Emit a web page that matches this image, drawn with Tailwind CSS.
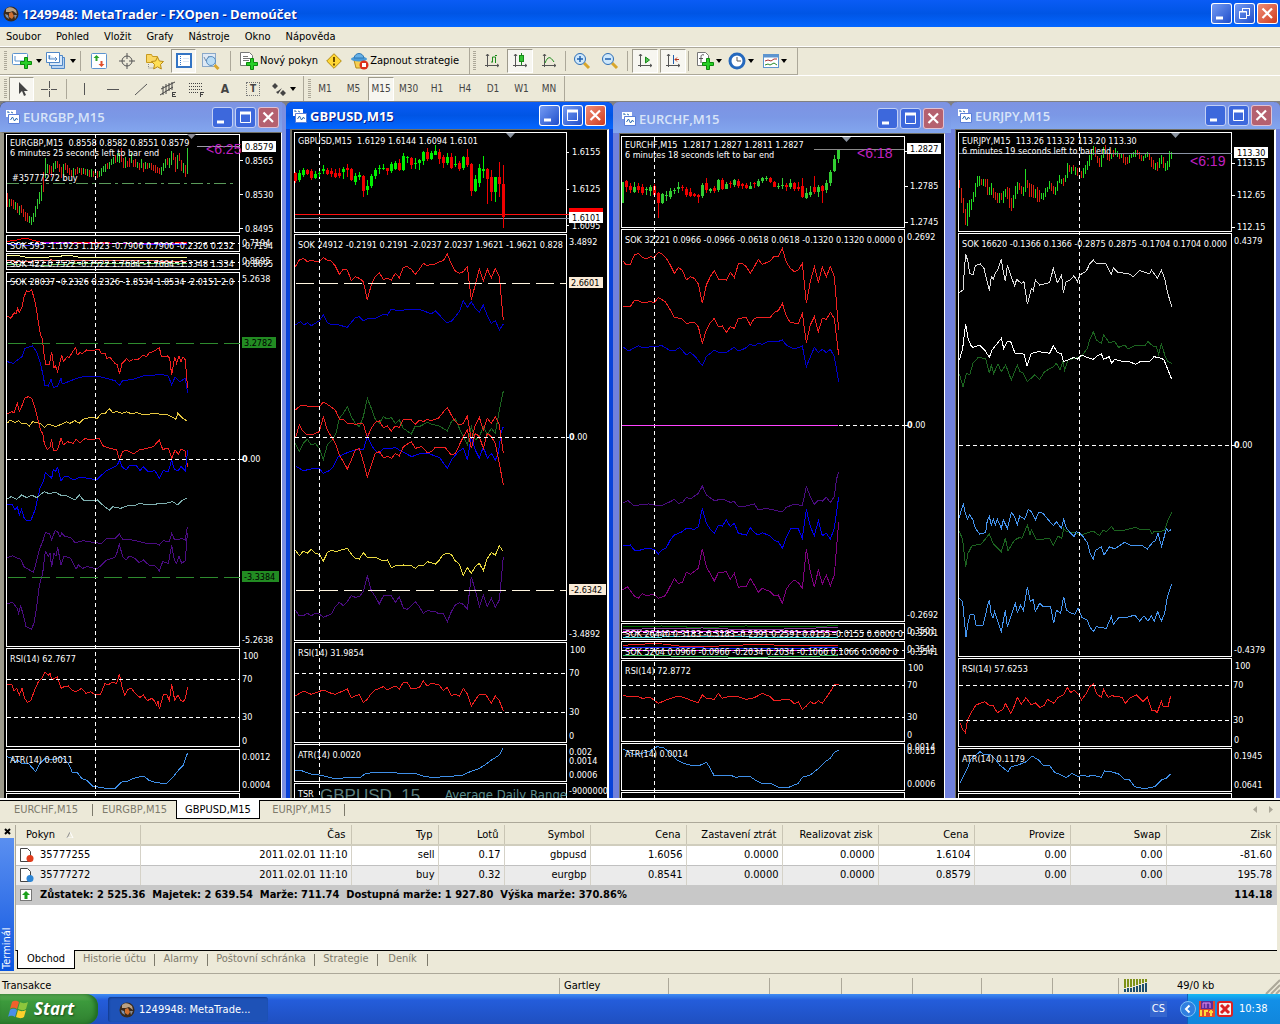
<!DOCTYPE html>
<html lang="cs">
<head>
    <meta charset="UTF-8">
    <meta name="viewport" content="width=device-width, initial-scale=1.0">
    <title>1249948: MetaTrader - FXOpen - Demoúčet</title>
    <script src="https://cdn.jsdelivr.net/npm/@tailwindcss/browser@4"></script>
    <style>
        body { font-family: 'DejaVu Sans Condensed', 'DejaVu Sans', sans-serif; }
        .caption { font-family: 'Open Sans', 'Noto Sans', sans-serif; }
        .chart text { font-size: 9px; fill: #fff; }
        .chart .clock { font: 14px 'Liberation Sans', sans-serif; fill: #c020c0; }
        .chart .series { fill: none; }
        .chart polyline { vector-effect: non-scaling-stroke; shape-rendering: crispEdges; }
        .chart .frame { fill: none; stroke: #fff; shape-rendering: crispEdges; }
        .chart .dash { fill: none; stroke: #fff; stroke-dasharray: 4 3; shape-rendering: crispEdges; }
    </style>
</head>
<body class="h-screen flex flex-col overflow-hidden bg-[#ece9d8] text-[11px] leading-4 text-black">

    <!-- Shared icons -->
    <svg class="hidden">
        <symbol id="i-min" viewBox="0 0 21 21"><path d="M5 15h7" stroke="#fff" stroke-width="3"/></symbol>
        <symbol id="i-max" viewBox="0 0 21 21"><path d="M5.500 6v9.500h10V6M5 6h11" fill="none" stroke="#fff"/><path d="M5 6h11" stroke="#fff" stroke-width="3"/></symbol>
        <symbol id="i-close" viewBox="0 0 21 21"><path d="M5.500 5.500l9.500 9.500M15 5.500l-9.500 9.500" stroke="#fff" stroke-width="2.200"/></symbol>
        <symbol id="i-doc" viewBox="0 0 16 16"><path d="M1 1h10v7H1z" fill="#fff"/><path d="M3.500 5.500h11v9h-11z" fill="#fff" stroke="#5b7fd8"/><path d="M2 3h2v1M6 3l2 1M5.500 11l2-3 2 4 2-3 1 2" fill="none" stroke="#2f6fb5"/></symbol>
        <symbol id="i-down" viewBox="0 0 6 4"><path d="M0 0h6L3 4z"/></symbol>
        <symbol id="i-plus" viewBox="0 0 12 12"><path d="M4.500.5h3v4h4v3h-4v4h-3v-4h-4v-3h4z" fill="#27cf27" stroke="#0b8a0b"/></symbol>
        <symbol id="i-axes" viewBox="0 0 16 16"><path d="M3.500 1v13M1 12.500h14M2 3l1.500-2L5 3M13 11l2 1.500-2 1.500" fill="none" stroke="#555"/></symbol>
        <symbol id="i-globe" viewBox="0 0 16 16"><circle cx="8" cy="8" r="7.500" fill="#3a2a1c"/><path d="M3 3c3-3 7-2 10 1l1 4-4-3-3 1-4 0z" fill="#b9a184"/><path d="M6 7l3-1 2 4-2 3-3-2z" fill="#cf6f2e"/><path d="M2 8l3 1 1 4-3-2z" fill="#7d93ad"/><path d="M11 9l3 0-2 4z" fill="#8a8f96"/></symbol>
    </svg>

    <!-- Title bar -->
    <header class="flex h-[27px] shrink-0 items-center px-[2px] bg-linear-to-b from-[#0a5cf5] via-[#0055e5] to-[#0466ff]">
        <svg class="size-4 mx-px"><use href="#i-globe"/></svg>
        <h1 class="caption ml-[2px] flex-1 text-[13px] font-bold text-white [text-shadow:1px_1px_#0a1883]">1249948: MetaTrader - FXOpen - Demoúčet</h1>
        <div class="flex gap-[2px]">
            <button aria-label="Minimalizovat" class="size-[21px] rounded-[3px] ring-1 ring-inset ring-white bg-linear-to-br from-[#7a9ff5] to-[#1c48c8]"><svg class="size-[21px]"><use href="#i-min"/></svg></button>
            <button aria-label="Obnovit" class="size-[21px] rounded-[3px] ring-1 ring-inset ring-white bg-linear-to-br from-[#7a9ff5] to-[#1c48c8]"><svg class="size-[21px]" fill="none" stroke="#fff"><path d="M8.500 8V5.500h7v7H13M8 5.500h8M5.500 8.500h7v7h-7zM5 9h8"/></svg></button>
            <button aria-label="Zavřít" class="size-[21px] rounded-[3px] ring-1 ring-inset ring-white bg-linear-to-br from-[#f0907a] to-[#cc3312]"><svg class="size-[21px]"><use href="#i-close"/></svg></button>
        </div>
    </header>

    <!-- Menu -->
    <nav class="flex h-5 shrink-0 items-center gap-[15px] border-b border-white px-[6px]">
        <a href="#">Soubor</a>
        <a href="#">Pohled</a>
        <a href="#">Vložit</a>
        <a href="#">Grafy</a>
        <a href="#">Nástroje</a>
        <a href="#">Okno</a>
        <a href="#">Nápověda</a>
    </nav>

    <!-- Main toolbar -->
    <div class="flex h-[28px] shrink-0 border-t border-[#aca899] whitespace-nowrap">
        <div class="flex w-[470px] shrink-0 items-center border-r border-b border-[#aca899] pl-1">
            <span class="h-5 w-[3px] bg-[repeating-linear-gradient(#aca899_0_1px,transparent_1px_2px)]"></span>
            <button aria-label="Nový graf" class="flex w-[34px] items-center gap-px pl-1"><svg class="h-5 w-6 shrink-0"><rect x="1.500" y="2.500" width="15" height="11" rx="1" fill="#fff" stroke="#5c94cf"/><path d="M4 5v5h9" fill="none" stroke="#5c94cf"/><use href="#i-plus" x="9" y="6" width="12" height="12"/></svg><svg class="h-1 w-[6px] shrink-0"><use href="#i-down"/></svg></button>
            <button aria-label="Profily" class="flex w-9 items-center gap-px pl-1"><svg class="h-5 w-6 shrink-0" fill="#fff" stroke="#4f87c7"><path d="M6.500 6.500h13v11h-13z" fill="#b9d3f0"/><path d="M4.500 4.500h13v10h-13z" fill="#d9e8f8"/><path d="M1.500 1.500h13v10h-13zM4 4v4h8M10 6l2 2-2 2"/></svg><svg class="h-1 w-[6px] shrink-0"><use href="#i-down"/></svg></button>
            <span class="mr-1 ml-[3px] h-5 w-px bg-[#aca899]"></span>
            <button aria-label="Tržní hlídka" class="flex w-7 justify-center"><svg class="size-4"><rect x=".5" y=".5" width="15" height="15" rx="1" fill="#fff" stroke="#5c94cf"/><path d="M5.500 2l3 3h-2v3h-2V5h-2z" fill="#2aa52a"/><path d="M10.500 14l3-3h-2V8h-2v3h-2z" fill="#e0502d"/></svg></button>
            <button aria-label="Datové okno" class="flex w-7 justify-center"><svg class="size-4" fill="none" stroke="#555"><circle cx="8" cy="8" r="5"/><path d="M8 0v6M8 10v6M0 8h6M10 8h6"/></svg></button>
            <button aria-label="Navigátor" class="flex w-7 justify-center"><svg class="h-[18px] w-5"><path d="M1.500 2.500h5l1 2h5v6h-11z" fill="#fbd763" stroke="#c79a1f"/><path d="M3.500 12v4h5" stroke="#888" stroke-dasharray="1 1" fill="none"/><path d="M12.500 5l1.900 4 4.100.5-3 3 .8 4.500-3.800-2.200L8.700 17l.8-4.500-3-3 4.100-.5z" fill="#ffdf55" stroke="#b98a15"/></svg></button>
            <button aria-label="Terminál" aria-pressed="true" class="ml-[2px] flex h-6 w-[25px] items-center justify-center border border-t-[#9d9a8c] border-l-[#9d9a8c] border-white bg-[#f7f6f0]"><svg class="size-4"><rect x="1" y="1" width="14" height="13" fill="#fff" stroke="#3374c4" stroke-width="2"/><path d="M4.500 3v10" stroke="#3374c4" stroke-dasharray="1 1"/><path d="M7 5.500h6M7 8.500h6" stroke="#dbe7f5"/></svg></button>
            <button aria-label="Tester strategií" class="flex w-[30px] justify-center"><svg class="h-[18px] w-5"><rect x="1.500" y="1.500" width="13" height="13" fill="#dfe9f4" stroke="#8aa8c8"/><path d="M3 5l2 4 3-5 3 5 2-4" stroke="#7c8fa5" fill="none"/><circle cx="10" cy="9" r="4.500" fill="#b9dcf5" stroke="#5b8ec0"/><path d="M13.500 13l4 4" stroke="#d8a62c" stroke-width="3"/></svg></button>
            <span class="mx-1 h-5 w-px bg-[#aca899]"></span>
            <button class="flex items-center gap-px pl-1"><svg class="h-[18px] w-5 shrink-0"><path d="M1.500.5h9l3 3v10h-12z" fill="#fff" stroke="#777"/><path d="M4 4.500h5M4 6.500h7M4 8.500h6" stroke="#777"/><use href="#i-plus" x="7" y="6" width="12" height="12"/></svg>Nový pokyn</button>
            <button aria-label="Upozornění" class="flex w-8 justify-center"><svg class="size-4"><path d="M8 .7L15.300 8 8 15.300.7 8z" fill="#ffd735" stroke="#b38a12"/><path d="M8 4v5M8 10.500v2" stroke="#6b4d00" stroke-width="2"/></svg></button>
            <button class="flex items-center"><svg class="h-[18px] w-5 shrink-0"><path d="M4 8l10 0-2 8-6 0z" fill="#f5cf52" stroke="#b98a15"/><ellipse cx="9" cy="7" rx="8" ry="2.500" fill="#4a9bd8"/><path d="M4 6c1-6 9-6 10 0z" fill="#66b0e6" stroke="#2e78b5"/><circle cx="14" cy="13" r="4.500" fill="#dd2f1a"/><rect x="12" y="11" width="4" height="4" fill="#fff"/></svg>Zapnout strategie</button>
        </div>
        <div class="flex w-[328px] shrink-0 items-center border-r border-b border-[#aca899] pl-[3px]">
            <span class="h-5 w-[3px] bg-[repeating-linear-gradient(#aca899_0_1px,transparent_1px_2px)]"></span>
            <button aria-label="Sloupcový graf" class="flex w-[31px] justify-center"><svg class="size-4"><use href="#i-axes"/><path d="M8.500 9V4h3v6M9 9H7M11 2.500h2" fill="none" stroke="#1a8a1a"/></svg></button>
            <button aria-label="Svíčkový graf" aria-pressed="true" class="flex h-6 w-[26px] items-center justify-center border border-t-[#9d9a8c] border-l-[#9d9a8c] border-white bg-[#f7f6f0]"><svg class="size-4"><use href="#i-axes"/><path d="M9.500 0v12" stroke="#1a8a1a"/><rect x="7.500" y="2.500" width="4" height="6" fill="#31c431" stroke="#1a8a1a"/></svg></button>
            <button aria-label="Čárový graf" class="flex w-8 justify-center"><svg class="size-4"><use href="#i-axes"/><path d="M4 10c3-7 5-7 9-1" fill="none" stroke="#1a8a1a"/></svg></button>
            <span class="h-5 w-px bg-[#aca899]"></span>
            <button aria-label="Přiblížit" class="ml-[2px] flex w-7 justify-center"><svg class="size-[18px]"><path d="M11 11l5 5" stroke="#d8a62c" stroke-width="3"/><circle cx="7" cy="7" r="5.500" fill="#cfe8fb" stroke="#2e6eb5"/><path d="M4 7h6M7 4v6" stroke="#1f5fae" stroke-width="1.500"/></svg></button>
            <button aria-label="Oddálit" class="flex w-7 justify-center"><svg class="size-[18px]"><path d="M11 11l5 5" stroke="#d8a62c" stroke-width="3"/><circle cx="7" cy="7" r="5.500" fill="#cfe8fb" stroke="#2e6eb5"/><path d="M4 7h6" stroke="#1f5fae" stroke-width="1.500"/></svg></button>
            <span class="mr-1 ml-[3px] h-5 w-px bg-[#aca899]"></span>
            <button aria-label="Automatický posun" aria-pressed="true" class="flex h-6 w-[26px] items-center justify-center border border-t-[#9d9a8c] border-l-[#9d9a8c] border-white bg-[#f7f6f0]"><svg class="size-4"><use href="#i-axes"/><path d="M8.500 4l4 3-4 3z" fill="#57c457" stroke="#1a8a1a"/></svg></button>
            <button aria-label="Odsazení grafu" aria-pressed="true" class="ml-[2px] flex h-6 w-[26px] items-center justify-center border border-t-[#9d9a8c] border-l-[#9d9a8c] border-white bg-[#f7f6f0]"><svg class="size-4"><use href="#i-axes"/><path d="M8.500 2v9" stroke="#1f5fae"/><path d="M14 6.500h-4M12 4.500l-2 2 2 2" stroke="#b5321c" fill="none"/></svg></button>
            <span class="mr-px ml-[2px] h-5 w-px bg-[#aca899]"></span>
            <button aria-label="Indikátory" class="flex w-8 items-center pl-[6px]"><svg class="h-[18px] w-5 shrink-0"><path d="M1.500.5h8l3 3v10h-11z" fill="#fff" stroke="#777"/><path d="M8 3c-3-1-3 1-3 3v5M3 6.500h4" fill="none" stroke="#555"/><use href="#i-plus" x="6" y="6" width="12" height="12"/></svg><svg class="h-1 w-[6px] shrink-0"><use href="#i-down"/></svg></button>
            <button aria-label="Období" class="ml-[2px] flex w-[34px] items-center gap-[2px] pl-1"><svg class="size-[18px] shrink-0"><circle cx="9" cy="9" r="7" fill="#fff" stroke="#2569bd" stroke-width="3"/><path d="M9 5v4h4" fill="none" stroke="#555"/></svg><svg class="h-1 w-[6px] shrink-0"><use href="#i-down"/></svg></button>
            <button aria-label="Šablony" class="ml-1 flex items-center gap-px"><svg class="h-4 w-[18px]"><rect x="1.500" y="1.500" width="15" height="13" fill="#fff" stroke="#5c94cf"/><path d="M1 3h16" stroke="#5c94cf" stroke-width="3"/><path d="M3 8l3-1 3 1 3-2 3 0" stroke="#a33" fill="none"/><path d="M3 12l3-1 2 1 4-2 3 2" stroke="#2a8a2a" fill="none"/></svg><svg class="h-1 w-[6px]"><use href="#i-down"/></svg></button>
        </div>
    </div>

    <!-- Drawing tools and periods -->
    <div class="flex h-[26px] shrink-0 border-t border-white text-[10px] text-[#444]">
        <div class="flex w-[304px] items-center border-r border-[#aca899] pl-1">
            <span class="h-5 w-[3px] bg-[repeating-linear-gradient(#aca899_0_1px,transparent_1px_2px)]"></span>
            <button aria-label="Kurzor" aria-pressed="true" class="ml-[2px] flex h-6 w-[25px] items-center justify-center border border-t-[#9d9a8c] border-l-[#9d9a8c] border-white bg-[#f7f6f0]"><svg class="size-4"><path d="M5 1v12l3-3 2 5 2-1-2-4h4z" fill="#444"/></svg></button>
            <button aria-label="Nitkový kříž" class="flex w-[30px] justify-center"><svg class="size-4" stroke="#555"><path d="M8.500 0v7M8.500 10v6M0 8.500h7M10 8.500h6M8 8.500h1"/></svg></button>
            <span class="mx-[2px] h-5 w-px bg-[#aca899]"></span>
            <button aria-label="Svislá čára" class="flex w-[30px] justify-center"><svg class="size-4" stroke="#555"><path d="M8.500 2v12"/></svg></button>
            <button aria-label="Vodorovná čára" class="flex w-7 justify-center"><svg class="size-4" stroke="#555"><path d="M2 8.500h12"/></svg></button>
            <button aria-label="Trendová čára" class="flex w-7 justify-center"><svg class="size-4" stroke="#555"><path d="M2 14L14 3"/></svg></button>
            <button aria-label="Kanál" class="flex w-7 justify-center"><svg class="h-[18px] w-5" stroke="#444" fill="none"><path d="M2 9L16 2M1 15L14 7M4 6v9M7 4v10M10 3v8M13 2v8"/><path d="M13.500 12v5M13 12.500h4M13 14.500h3M13 16.500h4"/></svg></button>
            <button aria-label="Fibonacci" class="flex w-7 justify-center"><svg class="h-[18px] w-5" stroke="#444" fill="none"><path d="M2 3.500h14M2 6.500h14M2 9.500h14M2 12.500h9" stroke-dasharray="1 1"/><path d="M13.500 12v5M13 12.500h4M13 14.500h3"/></svg></button>
            <button class="w-7 font-bold text-[12px]">A</button>
            <button class="flex w-7 justify-center"><span class="border border-dotted border-[#777] px-[3px] text-[10px] leading-3 font-bold">T</span></button>
            <button aria-label="Šipky" class="flex items-center gap-[3px] pl-1"><svg class="size-4" fill="#444"><path d="M4 2l3 3-3 3-3-3zM12 9l3 3-3 3-3-3zM5 11l2 2 4-6-4 3z"/></svg><svg class="h-1 w-[6px]" fill="#000"><use href="#i-down"/></svg></button>
        </div>
        <div class="flex w-[261px] items-center border-r border-[#aca899] pl-1">
            <span class="h-5 w-[3px] bg-[repeating-linear-gradient(#aca899_0_1px,transparent_1px_2px)]"></span>
            <button class="w-7">M1</button>
            <button class="w-[29px]">M5</button>
            <button aria-pressed="true" class="h-6 w-[26px] border border-t-[#9d9a8c] border-l-[#9d9a8c] border-white bg-[#f7f6f0]">M15</button>
            <button class="w-[29px]">M30</button>
            <button class="w-7">H1</button>
            <button class="w-7">H4</button>
            <button class="w-7">D1</button>
            <button class="w-[29px]">W1</button>
            <button class="w-[26px]">MN</button>
        </div>
    </div>

    <!-- Chart windows -->
    <main class="flex min-h-0 flex-1 items-stretch overflow-hidden border-t border-[#808080] bg-[#808080]">

        <!-- EURGBP -->
        <section class="flex w-[286px] shrink-0 flex-col rounded-t-md border-r-4 border-[#7b8fe0] bg-black">
            <div class="flex h-[30px] shrink-0 items-center gap-[2px] rounded-tl-md bg-linear-to-b from-[#7d93e3] via-[#7b98e6] to-[#83a6ee] pl-[5px]">
                <svg class="size-4"><use href="#i-doc"/></svg>
                <h2 class="caption flex-1 text-[13px] font-semibold text-[#d8e4f8]">EURGBP,M15</h2>
                <button aria-label="Minimalizovat" class="size-[21px] rounded-[3px] ring-1 ring-inset ring-[#c3d0f5] bg-[#3d68dc]"><svg class="size-[21px]"><use href="#i-min"/></svg></button>
                <button aria-label="Maximalizovat" class="size-[21px] rounded-[3px] ring-1 ring-inset ring-[#c3d0f5] bg-[#3d68dc]"><svg class="size-[21px]"><use href="#i-max"/></svg></button>
                <button aria-label="Zavřít" class="mr-[3px] size-[21px] rounded-[3px] ring-1 ring-inset ring-[#e0c3d5] bg-[#b5616f]"><svg class="size-[21px]"><use href="#i-close"/></svg></button>
            </div>
            <div class="min-h-0 flex-1 overflow-hidden border-t border-l-4 border-r border-t-[#716f64] border-l-[#9a988a] border-r-white">
            <svg class="chart h-[668px] w-[277px]" viewBox="4 133 277 668">
                <g class="candles" data-chart="eurgbp" transform="translate(0 100)"></g>
                <g class="series" transform="translate(0 100) scale(.33333)">
                    <polyline stroke="#f00" points="22,424 50,420 66,416 80,414 95,420 115,425 135,430 155,426 200,429 300,428 420,432 562,428"/>
                    <polyline stroke="#33f" points="22,432 80,436 150,430 562,433"/>
                    <polyline stroke="#c0c" points="120,428 300,430 562,430"/>
                    <polyline stroke="#ff9" points="22,466 60,468 80,472 115,474 160,470 210,466 250,474 562,473"/>
                    <polyline stroke="#f66" points="22,482 70,485 150,480 562,484"/>
                    <polyline stroke="#6c6" points="22,492 100,498 240,490 562,490"/>
                    <polyline stroke="#999" points="22,500 90,496 180,501 562,499"/>
                    <polyline stroke="#f02020" points="22,648 33,655 42,638 48,642 53,625 58,637 66,620 72,590 80,573 88,575 95,570 103,597 108,620 114,660 122,707 127,715 133,770 138,795 148,795 155,755 162,803 166,797 173,815 185,765 190,785 202,770 208,772 218,755 227,743 232,765 240,758 248,760 260,750 275,752 298,748 303,760 315,760 320,775 330,772 345,790 352,795 359,822 366,790 374,783 380,775 388,785 400,777 415,778 430,765 440,770 448,758 460,755 478,743 484,768 493,770 502,768 509,775 515,825 524,770 530,790 537,768 543,785 549,770 556,780 560,830 563,865"/>
                    <polyline stroke="#00c" points="22,785 40,790 55,778 66,770 75,745 97,738 110,755 120,785 128,820 135,857 145,858 153,838 160,862 172,860 183,835 187,852 205,845 230,835 260,828 300,830 330,838 345,842 358,856 368,842 400,838 430,828 465,825 480,822 505,828 515,855 525,832 540,845 556,835 563,880"/>
                    <polyline stroke="#e8c840" points="22,970 30,960 45,967 55,962 65,970 80,972 88,978 98,965 110,968 122,970 133,982 145,972 168,980 185,972 200,965 210,970 225,962 238,970 250,958 270,952 292,955 304,940 314,942 328,926 338,938 350,934 365,940 380,935 395,942 410,938 430,944 470,940 490,945 505,945 518,952 528,958 533,940 548,955 560,962"/>
                    <polyline stroke="#f02020" points="22,942 35,935 42,938 52,910 58,935 68,912 74,895 85,890 95,895 105,925 115,965 122,992 128,1000 133,1030 142,1048 150,1042 155,1018 160,1052 172,1050 183,1015 190,1035 202,1025 220,1030 228,1018 240,1028 256,1015 270,1020 297,1015 310,1038 330,1045 350,1050 358,1078 368,1055 380,1050 400,1062 418,1050 440,1045 460,1040 478,1020 488,1048 505,1045 515,1075 525,1050 535,1062 543,1048 555,1052 563,1100"/>
                </g>
                <g class="series" transform="translate(0 450) scale(.33333)">
                    <polyline stroke="#00e" points="22,165 38,165 45,180 52,170 58,195 65,178 72,203 80,213 92,213 105,180 112,150 120,115 130,95 136,68 148,78 155,85 160,58 166,65 173,52 183,92 195,78 205,80 220,90 240,82 265,85 290,90 305,75 320,62 345,50 352,45 359,30 366,50 378,60 390,45 410,48 420,62 430,50 445,65 465,62 478,85 490,62 505,65 515,30 523,58 535,62 543,50 556,62 563,0"/>
                    <polyline stroke="#7fb0b0" points="22,147 33,140 50,148 65,135 80,143 95,135 110,143 133,125 145,130 168,128 185,137 200,138 225,150 238,135 250,150 270,152 292,150 305,162 328,181 338,170 362,175 380,168 400,168 420,160 445,165 470,162 490,162 518,155 533,165 548,150 560,145"/>
                    <polyline stroke="#4b0c82" points="22,323 38,317 52,325 62,328 72,350 85,358 100,367 108,340 118,298 128,275 136,248 148,250 155,270 165,242 173,245 180,262 185,250 195,260 212,262 225,278 250,272 285,278 305,280 320,265 345,265 358,252 368,268 385,268 420,275 440,280 465,280 478,285 490,272 508,275 515,250 524,270 535,270 545,265 556,270 562,230"/>
                    <polyline stroke="#4b0c82" points="22,460 38,458 52,475 56,490 62,468 70,495 78,530 95,538 103,515 110,470 118,405 128,370 136,305 145,318 150,310 155,350 162,310 168,318 173,292 183,345 192,318 212,325 228,358 235,345 248,355 262,350 290,357 305,345 320,330 345,322 352,305 358,283 368,320 378,330 388,318 405,325 418,338 430,330 450,348 465,348 478,362 488,335 505,340 515,285 523,330 530,340 537,318 545,340 556,332 562,250"/>
                    <polyline stroke="#f02020" points="22,702 36,705 42,722 50,715 58,735 66,715 74,745 82,757 92,752 105,718 115,695 125,685 135,667 145,675 150,670 156,690 172,680 183,715 192,710 205,708 215,720 227,725 245,715 258,730 272,725 285,735 302,732 315,700 325,705 335,697 350,700 358,672 366,710 374,735 384,718 394,715 410,735 420,742 430,735 442,752 455,745 465,755 470,765 474,752 478,778 490,735 500,733 508,752 515,702 524,750 534,735 543,752 550,755 556,745 563,710"/>
                    <polyline stroke="#3f8fe8" points="22,920 36,925 45,938 52,930 65,940 85,940 107,965 120,940 135,925 160,930 178,922 190,925 205,940 217,967 232,968 245,985 262,992 280,1010 305,1012 320,1016 345,1016 360,1000 368,995 385,993 400,985 432,978 448,992 470,998 500,1001 520,980 540,955 550,945 557,925 563,908"/>
                </g>
                <path class="frame" d="M6.500 134.500h233v98h-233zM6.500 235.500h233v16h-233zM6.500 253.500h233v16h-233zM6.500 272.500h233v374h-233zM6.500 648.500h233v98h-233zM6.500 749.500h233v42h-233zM6.500 802v-8.500h233v8.500M240 160.500h3M240 194.500h3M240 228.500h3M240 459.500h3"/>
                <path class="dash" d="M95.500 134v668M7 459.500h233M7 679.500h233M7 717.500h233M7 243.500h233M7 262.500h233M7 281.500h233"/>
                <path d="M7 183.500h230" stroke="#5a9a5a" stroke-dasharray="12 4 3 4" shape-rendering="crispEdges"/>
                <path d="M8 343.500h232M8 577.500h232" stroke="#2e8b2e" stroke-dasharray="18 6" shape-rendering="crispEdges"/>
                <path d="M197 146.500h43" stroke="#9a9aa5" shape-rendering="crispEdges"/>
                <path d="M187 134h9l-4.500 5z" fill="#8a8a94"/>
                <text x="10" y="146" xml:space="preserve">EURGBP,M15  0.8558 0.8582 0.8551 0.8579</text>
                <text x="10" y="156">6 minutes 25 seconds left to bar end</text>
                <text x="12" y="181">#35777272 buy</text>
                <text class="clock" x="206" y="154">&lt;6:25</text>
                <text x="10" y="249">SOK 595 -1.1923 1.1923 -0.7906 0.7906 -0.2326 0.232</text>
                <text x="10" y="267">SOK 422 0.7522 -0.7522 1.7684 -1.7684 -1.3348 1.334</text>
                <text x="10" y="285">SOK 28037 -0.2326 0.2326 -1.8534 1.8534 -2.0151 2.0</text>
                <text x="10" y="662">RSI(14) 62.7677</text>
                <text x="10" y="763">ATR(14) 0.0011</text>
                <rect x="242" y="141" width="34" height="11" fill="#fff"/>
                <text x="245" y="150" style="fill:#000">0.8579</text>
                <text x="245" y="164">0.8565</text>
                <text x="245" y="198">0.8530</text>
                <text x="245" y="232">0.8495</text>
                <text x="242" y="246">0.7194</text>
                <text x="242" y="249">-0.7194</text>
                <text x="242" y="264">0.8695</text>
                <text x="242" y="267">-0.8695</text>
                <text x="242" y="282">5.2638</text>
                <rect x="242" y="337" width="34" height="11" fill="#228b22"/>
                <text x="244" y="346" style="fill:#000">3.2782</text>
                <text x="242" y="462"><tspan font-weight="bold">0</tspan>.00</text>
                <rect x="242" y="571" width="37" height="11" fill="#228b22"/>
                <text x="244" y="580" style="fill:#000">-3.3384</text>
                <text x="242" y="643">-5.2638</text>
                <text x="243" y="659">100</text>
                <text x="242" y="682">70</text>
                <text x="242" y="720">30</text>
                <text x="242" y="744">0</text>
                <text x="242" y="760">0.0012</text>
                <text x="242" y="788">0.0004</text>
            </svg>
            </div>
        </section>

        <!-- GBPUSD, active -->
        <section class="flex w-[327px] shrink-0 flex-col rounded-t-md border-x-4 border-[#0842d8] bg-black">
            <div class="-mx-1 flex h-[27px] shrink-0 items-center gap-[2px] rounded-t-md bg-linear-to-b from-[#0a5cf5] via-[#0055e5] to-[#0466ff] pl-[6px]">
                <svg class="size-4"><use href="#i-doc"/></svg>
                <h2 class="caption flex-1 text-[13px] font-bold text-white [text-shadow:1px_1px_#0a1883]">GBPUSD,M15</h2>
                <button aria-label="Minimalizovat" class="size-[21px] rounded-[3px] ring-1 ring-inset ring-white bg-linear-to-br from-[#7a9ff5] to-[#1c48c8]"><svg class="size-[21px]"><use href="#i-min"/></svg></button>
                <button aria-label="Maximalizovat" class="size-[21px] rounded-[3px] ring-1 ring-inset ring-white bg-linear-to-br from-[#7a9ff5] to-[#1c48c8]"><svg class="size-[21px]"><use href="#i-max"/></svg></button>
                <button aria-label="Zavřít" class="mr-[7px] size-[21px] rounded-[3px] ring-1 ring-inset ring-white bg-linear-to-br from-[#f0907a] to-[#cc3312]"><svg class="size-[21px]"><use href="#i-close"/></svg></button>
            </div>
            <div class="min-h-0 flex-1 overflow-hidden border-t border-l-2 border-r-2 border-t-[#716f64] border-l-[#716f64] border-r-white">
            <svg class="chart h-[671px] w-[315px]" viewBox="292 130 315 671">
                <g class="series" transform="translate(285 100) scale(.33333)">
                    <polyline stroke="#f02020" points="31,500 43,480 55,475 67,485 79,480 91,485 103,485 115,473 127,480 139,483 151,498 163,523 175,507 187,510 199,542 211,530 223,535 235,545 247,600 259,553 271,530 283,518 295,538 307,535 319,540 331,520 343,533 355,502 367,500 379,508 391,523 403,508 415,490 427,497 439,493 451,492 463,485 475,482 487,462 499,492 511,513 523,520 535,515 547,500 559,600 571,553 583,507 595,543 607,507 619,533 631,505 643,530 655,660"/>
                    <polyline stroke="#00c" points="31,675 46,665 58,675 67,668 79,677 91,670 103,662 115,645 127,667 139,675 151,672 187,682 211,653 223,650 235,663 247,656 271,655 295,643 307,645 319,627 343,633 367,628 391,630 403,628 415,632 439,642 451,633 463,645 485,668 500,663 515,645 523,635 535,602 547,622 559,605 571,625 583,637 595,615 607,648 619,670 631,662 643,690 655,672"/>
                    <polyline stroke="#00e" points="34,1100 55,1112 79,1107 103,1105 115,1120 133,1112 145,1100 160,1070 187,1058 211,1050 235,1050 247,1008 259,1035 271,1052 283,1060 295,1045 319,1045 331,1042 343,1050 380,1070 403,1062 430,1060 450,1068 463,1072 487,1105 499,1080 520,1055 535,1045 547,1080 559,1010 571,1050 583,1075 595,1040 607,1075 619,1060 631,1080 640,1060 648,1000 655,980"/>
                    <polyline stroke="#1c6420" points="31,1030 43,1055 55,1030 67,1018 79,1035 91,1030 103,1045 115,1078 127,1035 145,1015 153,1000 163,955 175,940 187,920 199,950 211,970 223,980 235,950 247,895 259,925 271,958 283,970 295,950 307,957 319,953 331,970 343,960 355,985 379,1002 391,978 403,980 427,967 439,972 463,978 487,993 499,965 511,957 523,985 535,1010 547,1035 559,980 571,1020 583,1010 595,980 607,1005 619,985 631,1000 643,930 655,873"/>
                    <polyline stroke="#f02020" points="31,930 46,917 67,918 79,920 91,918 103,920 115,906 130,915 151,930 163,957 175,958 187,970 199,970 211,973 223,970 235,972 247,1012 259,985 271,967 283,963 295,983 307,978 319,993 331,978 343,982 355,958 367,960 379,960 391,973 403,960 415,965 427,958 439,962 460,955 472,940 487,922 499,945 511,965 523,975 535,970 547,948 559,1018 571,975 583,952 595,990 607,955 619,970 631,950 643,975 655,1060"/>
                    <polyline stroke="#f02020" points="31,1015 43,975 52,992 67,1005 79,1005 91,1000 103,995 115,950 127,990 139,1010 151,1030 163,1065 175,1085 187,1107 199,1080 211,1050 223,1045 235,1085 247,1130 259,1095 271,1060 283,1055 295,1072 310,1070 320,1075 331,1060 343,1068 355,1040 379,1025 391,1045 410,1040 427,1058 439,1055 451,1042 480,1042 499,1065 511,1060 523,1035 535,1010 547,990 559,1045 571,1000 583,1010 595,1045 607,1000 619,1010 631,1030 643,1090 655,1155"/>
                </g>
                <g class="series" transform="translate(285 450) scale(.33333)">
                    <polyline stroke="#e8d840" points="31,300 43,317 55,303 67,310 79,298 91,310 103,313 115,333 127,308 139,300 151,305 187,295 199,312 211,325 223,327 235,308 247,322 271,322 295,333 307,330 319,353 331,347 355,345 379,347 391,355 403,345 415,347 427,335 451,342 463,330 475,313 487,310 499,313 511,333 523,342 535,377 547,352 559,370 571,350 583,340 595,362 607,325 619,308 631,315 643,287 653,303"/>
                    <polyline stroke="#4b0c82" points="31,480 43,498 55,497 67,490 79,497 91,490 103,492 115,502 139,492 151,470 163,457 175,467 187,455 199,437 211,442 223,440 235,425 247,378 259,422 271,440 283,462 295,438 319,437 331,457 343,440 355,475 367,478 379,467 391,455 403,470 415,490 427,482 451,485 463,492 475,490 487,515 499,485 511,465 523,458 535,463 547,478 559,380 571,422 583,470 595,435 607,470 619,445 631,472 643,450 655,320"/>
                    <polyline stroke="#f02020" points="31,738 55,723 79,733 115,720 139,730 151,733 187,717 199,743 223,733 235,757 247,748 259,730 271,720 295,710 307,720 331,708 343,717 355,697 367,698 379,717 403,713 415,693 427,708 439,700 463,705 475,722 487,712 499,737 511,732 523,738 535,715 547,732 559,768 571,750 583,733 603,735 619,760 631,738 643,752 655,783"/>
                    <polyline stroke="#3f8fe8" points="31,963 45,960 65,968 80,973 103,975 125,980 151,987 175,984 225,983 240,972 265,967 325,967 350,972 391,970 420,980 455,983 480,978 500,980 515,975 530,977 560,963 580,957 600,945 620,930 643,915 655,893"/>
                </g>
                <path class="frame" d="M294.500 132.500h272v100h-272zM294.500 234.500h272v406h-272zM294.500 642.500h272v100h-272zM294.500 744.500h272v37h-272zM294.500 802v-18.500h272v18.500M567 152.500h2M567 189.500h2M567 225.500h2M567 437.500h2"/>
                <path class="dash" d="M319.500 133v669M295 437.500h272M295 673.500h272M295 712.500h272"/>
                <path d="M296 283.500h271M296 590.500h271" stroke="#fff6e0" stroke-dasharray="18 6" shape-rendering="crispEdges"/>
                <path d="M295 214.500h274" stroke="#ff1010" shape-rendering="crispEdges"/>
                <path d="M295 218.500h274" stroke="#8a93a5" shape-rendering="crispEdges"/>
                <g class="candles" data-chart="gbpusd" transform="translate(285 100)"></g>
                <path d="M506 133h9l-4.500 5z" fill="#8a93a0"/>
                <text x="298" y="144" xml:space="preserve">GBPUSD,M15  1.6129 1.6144 1.6094 1.6101</text>
                <svg x="295" y="235" width="271" height="20"><text x="3" y="13">SOK 24912 -0.2191 0.2191 -2.0237 2.0237 1.9621 -1.9621 0.828</text></svg>
                <text x="298" y="656">RSI(14) 31.9854</text>
                <text x="298" y="758">ATR(14) 0.0020</text>
                <text x="298" y="797">TSR</text>
                <text x="320" y="801" xml:space="preserve" style="font:17px 'Liberation Sans',sans-serif;fill:#5f8080">GBPUSD  15</text>
                <text x="445" y="799" style="font-size:13px;fill:#5f9090">Average Daily Range</text>
                <text x="572" y="155">1.6155</text>
                <text x="572" y="192">1.6125</text>
                <text x="572" y="229">1.6095</text>
                <rect x="569" y="208" width="34" height="5" fill="#f00"/>
                <rect x="569" y="212" width="34" height="11" fill="#fff"/>
                <text x="572" y="221" style="fill:#000">1.6101</text>
                <text x="569" y="245">3.4892</text>
                <rect x="569" y="277" width="34" height="11" fill="#faebd7"/>
                <text x="571" y="286" style="fill:#000">2.6601</text>
                <text x="569" y="440"><tspan font-weight="bold">0</tspan>.00</text>
                <rect x="569" y="584" width="37" height="11" fill="#faebd7"/>
                <text x="571" y="593" style="fill:#000">-2.6342</text>
                <text x="569" y="637">-3.4892</text>
                <text x="570" y="653">100</text>
                <text x="569" y="676">70</text>
                <text x="569" y="715">30</text>
                <text x="569" y="739">0</text>
                <text x="569" y="755">0.002</text>
                <text x="569" y="764">0.0014</text>
                <text x="569" y="778">0.0006</text>
                <text x="569" y="794">-9000000</text>
            </svg>
            </div>
        </section>

        <!-- EURCHF -->
        <section class="flex w-[338px] shrink-0 flex-col rounded-t-md border-x-[6px] border-[#7080dc] bg-black">
            <div class="-mx-[6px] flex h-[31px] shrink-0 items-center gap-[2px] rounded-t-md bg-linear-to-b from-[#7d93e3] via-[#7b98e6] to-[#83a6ee] pt-[2px] pl-2">
                <svg class="size-4"><use href="#i-doc"/></svg>
                <h2 class="caption flex-1 text-[13px] font-semibold text-[#d8e4f8]">EURCHF,M15</h2>
                <button aria-label="Minimalizovat" class="size-[21px] rounded-[3px] ring-1 ring-inset ring-[#c3d0f5] bg-[#3d68dc]"><svg class="size-[21px]"><use href="#i-min"/></svg></button>
                <button aria-label="Maximalizovat" class="size-[21px] rounded-[3px] ring-1 ring-inset ring-[#c3d0f5] bg-[#3d68dc]"><svg class="size-[21px]"><use href="#i-max"/></svg></button>
                <button aria-label="Zavřít" class="mr-[7px] size-[21px] rounded-[3px] ring-1 ring-inset ring-[#e0c3d5] bg-[#b5616f]"><svg class="size-[21px]"><use href="#i-close"/></svg></button>
            </div>
            <div class="min-h-0 flex-1 overflow-hidden border-t border-l border-r border-t-[#716f64] border-l-[#716f64] border-r-white">
            <svg class="chart h-[667px] w-[325px]" viewBox="620 134 325 667">
                <g class="candles" data-chart="eurchf" transform="translate(612 100)"></g>
                <g class="series" transform="translate(612 100) scale(.33333)">
                    <polyline stroke="#f02020" points="32,482 43,495 55,493 67,465 79,460 91,472 103,477 115,470 127,472 139,457 151,462 163,475 175,495 187,520 199,503 211,510 223,540 235,530 247,535 259,552 271,610 283,555 295,530 307,512 319,537 343,540 355,517 367,533 379,492 391,490 403,500 415,520 427,500 439,478 451,493 475,483 487,468 499,470 511,445 523,487 535,505 547,515 559,510 571,490 583,610 595,545 607,500 619,548 631,502 643,530 655,500 667,530 680,690"/>
                    <polyline stroke="#f02020" points="32,620 55,620 67,602 79,602 91,608 115,605 127,608 139,593 160,605 175,630 187,652 211,657 223,670 247,667 259,680 271,730 283,690 295,668 307,655 319,680 331,678 343,697 355,680 367,685 379,655 403,653 415,675 427,655 439,652 475,652 487,637 499,632 511,610 523,648 535,668 559,670 571,640 583,728 595,675 607,650 619,695 631,655 643,658 655,637 667,655 680,765"/>
                    <polyline stroke="#00c" points="32,740 50,753 79,737 91,743 150,737 175,752 187,753 203,742 223,765 235,757 250,770 271,797 283,770 307,750 319,757 343,757 367,742 379,753 400,745 415,732 427,738 439,730 451,733 470,723 500,724 511,720 523,735 547,747 571,738 583,800 607,742 619,757 631,748 643,758 655,748 667,770 680,845"/>
                </g>
                <g class="series" transform="translate(612 450) scale(.33333)">
                    <polyline stroke="#4b0c82" points="32,160 48,152 67,168 91,163 110,162 145,168 175,155 187,148 199,160 211,158 223,142 235,147 259,130 271,108 283,135 307,152 331,147 355,157 367,155 379,170 403,168 427,162 439,180 463,175 499,183 511,185 523,172 547,162 571,167 583,110 595,140 607,163 619,150 631,153 643,142 655,157 667,140 673,90 680,65"/>
                    <polyline stroke="#00e" points="32,287 55,285 67,300 79,302 103,295 127,298 139,312 150,300 163,293 175,270 187,255 211,245 223,235 247,238 259,230 271,175 283,220 295,238 307,250 319,225 331,228 343,210 355,230 367,220 379,250 403,255 415,233 427,248 439,255 451,248 475,258 487,272 499,275 511,295 523,262 535,237 559,237 571,265 583,178 595,230 607,257 619,212 631,257 643,250 655,267 667,235 680,140"/>
                    <polyline stroke="#800080" points="32,420 46,410 67,438 79,445 91,430 103,438 127,432 139,445 160,437 175,408 187,385 199,400 211,398 223,367 235,373 259,355 271,297 283,350 307,393 319,368 343,365 355,388 367,370 379,412 391,410 403,410 415,385 427,405 439,427 451,415 475,425 487,437 499,435 511,460 523,418 535,400 547,390 559,398 571,415 583,297 595,365 607,410 619,360 631,402 643,375 655,407 667,375 680,215"/>
                    <polyline stroke="#060" points="32,530 150,528 271,533 400,528 583,530 678,527"/>
                    <polyline stroke="#849" points="32,538 271,534 420,540 678,532"/>
                    <polyline stroke="#f4f" points="32,545 678,545"/>
                    <polyline stroke="#844" points="32,553 300,556 678,552"/>
                    <polyline stroke="#4dd" points="32,562 271,560 678,563"/>
                    <polyline stroke="#f02020" points="32,586 135,580 200,588 271,590 420,584 678,588"/>
                    <polyline stroke="#22f" points="32,592 271,594 430,596 678,593"/>
                    <polyline stroke="#f4f" points="32,602 678,602"/>
                    <polyline stroke="#3b5" points="32,615 271,620 420,622 678,617"/>
                    <polyline stroke="#f02020" points="32,735 50,740 75,738 91,745 115,742 139,760 163,750 199,738 223,745 247,755 259,757 271,735 283,745 307,748 319,730 331,745 355,738 379,740 403,748 427,743 451,730 475,740 487,753 523,748 535,750 547,762 559,755 571,778 583,768 595,755 607,762 619,752 631,760 643,742 655,725 667,705 680,702"/>
                    <polyline stroke="#3f8fe8" points="32,897 50,905 70,915 90,910 110,905 135,890 155,893 175,910 195,930 215,940 235,945 259,948 283,937 292,950 307,978 355,975 370,982 391,979 415,980 430,990 450,1000 475,1000 499,1012 530,1012 559,1000 571,982 595,975 620,955 640,935 655,925 667,907 680,900"/>
                </g>
                <path class="frame" d="M621.500 136.500h283v91h-283zM621.500 229.500h283v392h-283zM621.500 623.500h283v16h-283zM621.500 641.500h283v17h-283zM621.500 660.500h283v81h-283zM621.500 743.500h283v47h-283zM621.500 802v-9.500h283v9.500M905 151.500h3M905 186.500h3M905 222.500h3M905 425.500h3"/>
                <path class="dash" d="M654.500 137v665M622 425.500h283M622 685.500h283M622 717.500h283M622 632.500h283M622 650.500h283"/>
                <path d="M622 425.500h216" stroke="#f4f" shape-rendering="crispEdges"/>
                <path d="M814 149.500h90" stroke="#8a8a8a" shape-rendering="crispEdges"/>
                <path d="M842 137h9l-4.500 5z" fill="#8a93a0"/>
                <text x="625" y="148" xml:space="preserve">EURCHF,M15  1.2817 1.2827 1.2811 1.2827</text>
                <text x="625" y="158">6 minutes 18 seconds left to bar end</text>
                <text class="clock" x="857" y="158">&lt;6:18</text>
                <svg x="622" y="230" width="282" height="20"><text x="3" y="13">SOK 32221 0.0966 -0.0966 -0.0618 0.0618 -0.1320 0.1320 0.0000 0</text></svg>
                <svg x="622" y="624" width="282" height="36"><text x="3" y="13">SOK 26440 0.3183 -0.3183 -0.2591 0.2591 0.0155 -0.0155 0.0000 0</text><text x="3" y="31">SOK 5264 0.0966 -0.0966 -0.2034 0.2034 -0.1066 0.1066 0.0000 0</text></svg>
                <text x="625" y="674">RSI(14) 72.8772</text>
                <text x="625" y="757">ATR(14) 0.0014</text>
                <rect x="907" y="143" width="34" height="11" fill="#fff"/>
                <text x="910" y="152" style="fill:#000">1.2827</text>
                <text x="910" y="189">1.2785</text>
                <text x="910" y="225">1.2745</text>
                <text x="907" y="240">0.2692</text>
                <text x="907" y="428"><tspan font-weight="bold">0</tspan>.00</text>
                <text x="907" y="618">-0.2692</text>
                <text x="907" y="634">0.3501</text>
                <text x="907" y="636">-0.3501</text>
                <text x="907" y="652">0.3541</text>
                <text x="907" y="655">-0.3541</text>
                <text x="908" y="671">100</text>
                <text x="907" y="688">70</text>
                <text x="907" y="720">30</text>
                <text x="907" y="738">0</text>
                <text x="907" y="750">0.0014</text>
                <text x="907" y="754">0.0015</text>
                <text x="907" y="787">0.0006</text>
            </svg>
            </div>
        </section>

        <!-- EURJPY -->
        <section class="flex min-w-[329px] flex-1 flex-col rounded-t-md border-x-4 border-[#7080dc] bg-black">
            <div class="-mx-1 flex h-[27px] shrink-0 items-center gap-[2px] rounded-t-md bg-linear-to-b from-[#7d93e3] via-[#7b98e6] to-[#83a6ee] pl-[6px]">
                <svg class="size-4"><use href="#i-doc"/></svg>
                <h2 class="caption flex-1 text-[13px] font-semibold text-[#d8e4f8]">EURJPY,M15</h2>
                <button aria-label="Minimalizovat" class="size-[21px] rounded-[3px] ring-1 ring-inset ring-[#c3d0f5] bg-[#3d68dc]"><svg class="size-[21px]"><use href="#i-min"/></svg></button>
                <button aria-label="Maximalizovat" class="size-[21px] rounded-[3px] ring-1 ring-inset ring-[#c3d0f5] bg-[#3d68dc]"><svg class="size-[21px]"><use href="#i-max"/></svg></button>
                <button aria-label="Zavřít" class="mr-2 size-[21px] rounded-[3px] ring-1 ring-inset ring-[#e0c3d5] bg-[#b5616f]"><svg class="size-[21px]"><use href="#i-close"/></svg></button>
            </div>
            <div class="min-h-0 flex-1 overflow-hidden border-t border-l border-r-2 border-t-[#716f64] border-l-[#716f64] border-r-white">
            <svg class="chart h-[671px] w-[315px]" viewBox="956 130 315 671">
                <g class="candles" data-chart="eurjpy" transform="translate(948 100)"></g>
                <g class="series" transform="translate(948 100) scale(.33333)">
                    <polyline stroke="#ddd" points="34,578 45,570 49,510 53,462 60,485 65,520 75,525 82,497 97,492 108,505 116,540 124,572 130,530 136,537 142,520 150,508 160,478 166,515 172,543 178,495 187,523 200,558 206,538 220,550 228,545 238,613 250,565 256,572 262,540 275,555 288,552 305,548 316,505 328,548 341,525 346,580 354,545 367,540 378,527 388,545 396,525 415,513 425,492 436,480 445,490 473,490 480,503 490,523 496,503 510,518 540,520 556,530 575,512 605,522 610,510 618,520 628,535 640,510 650,535 658,575 671,620"/>
                    <polyline stroke="#1c6420" points="34,822 45,860 55,820 65,825 75,790 90,773 113,775 124,820 130,795 137,820 150,792 160,815 173,795 190,840 208,795 216,815 224,818 238,845 260,825 275,838 290,815 316,800 325,790 336,810 345,785 350,810 360,780 380,775 400,770 418,745 425,720 436,695 445,720 460,730 467,705 475,715 482,727 500,725 512,742 530,735 540,747 565,735 590,738 600,725 615,738 625,740 632,763 640,732 652,770 660,785 671,790"/>
                    <polyline stroke="#fff" points="34,780 44,745 53,672 60,715 68,735 75,742 95,735 110,750 124,772 132,750 148,730 160,715 167,745 178,725 188,725 202,762 220,760 228,763 237,797 250,760 270,755 288,757 305,760 316,737 328,758 340,760 346,785 360,780 378,772 388,778 400,765 412,770 436,778 447,768 460,762 467,778 484,770 491,790 500,778 525,785 540,783 562,793 580,783 605,785 618,770 640,775 648,780 658,805 671,837"/>
                </g>
                <g class="series" transform="translate(948 450) scale(.33333)">
                    <polyline stroke="#1c6420" points="34,243 44,270 53,350 60,310 72,287 100,282 124,252 135,280 160,305 172,265 180,302 200,270 215,262 222,265 238,225 246,255 250,240 265,270 305,265 316,287 330,258 341,265 347,235 355,245 378,248 400,255 435,243 455,257 465,240 475,245 491,230 500,242 530,240 562,232 580,240 605,238 612,252 618,245 635,245 650,240 660,210 671,187"/>
                    <polyline stroke="#4595f0" points="34,205 40,178 46,163 52,190 58,208 65,195 75,210 82,235 95,252 113,248 118,210 124,200 130,225 136,208 142,225 148,208 160,235 166,210 178,235 190,187 200,200 208,225 215,198 230,208 241,178 250,185 262,210 272,187 285,190 300,208 316,227 325,215 340,235 347,208 355,235 378,260 385,245 395,250 404,258 418,278 427,312 436,327 442,302 460,290 468,315 485,290 500,297 530,277 550,287 580,285 598,297 613,278 622,272 630,250 641,290 655,235 661,245 670,238"/>
                    <polyline stroke="#4595f0" points="34,445 44,455 48,500 54,560 60,520 66,495 78,495 84,525 104,528 112,497 118,470 124,450 130,495 135,505 140,485 148,510 160,545 172,480 178,530 202,460 208,488 218,465 226,482 238,410 247,455 256,448 262,485 275,460 286,470 308,470 317,520 325,480 338,490 347,440 355,480 370,490 380,493 390,475 402,503 418,510 425,530 436,545 445,530 475,535 490,500 496,523 512,503 535,503 560,495 575,513 588,498 600,513 610,497 619,513 629,485 640,513 650,490 658,440 671,403"/>
                    <polyline stroke="#f02020" points="36,818 44,838 52,848 58,812 68,790 84,765 110,755 125,767 134,765 148,788 166,777 172,760 188,790 196,775 208,742 220,763 234,743 250,765 262,758 276,773 290,765 298,748 318,760 330,742 348,733 358,712 368,728 378,720 394,735 400,750 415,730 425,710 436,702 446,732 460,742 467,718 480,742 490,737 522,742 532,760 545,745 565,735 585,755 598,742 612,782 622,783 628,788 640,752 646,770 660,770 668,738"/>
                    <polyline stroke="#3f8fe8" points="36,1000 48,975 60,950 70,925 84,915 96,905 110,915 125,912 140,925 155,945 180,965 190,950 210,945 235,935 252,918 272,930 285,945 305,947 320,967 340,975 355,983 372,970 390,980 405,975 420,980 432,975 460,982 470,963 490,965 512,972 530,988 545,990 560,1010 590,1016 620,1010 640,990 655,985 668,972"/>
                </g>
                <path class="frame" d="M958.500 132.500h273v99h-273zM958.500 233.500h273v423h-273zM958.500 658.500h273v88h-273zM958.500 748.500h273v43h-273zM958.500 802v-8.500h273v8.500M1232 163.500h3M1232 195.500h3M1232 227.500h3M1232 445.500h3"/>
                <path class="dash" d="M1079.500 133v669M959 445.500h273M959 685.500h273M959 720.500h273"/>
                <path d="M959 153.500h273" stroke="#8a93a5" shape-rendering="crispEdges"/>
                <path d="M1171 133h9l-4.500 5z" fill="#8a93a0"/>
                <text x="962" y="144" xml:space="preserve">EURJPY,M15  113.26 113.32 113.20 113.30</text>
                <text x="962" y="154">6 minutes 19 seconds left to bar end</text>
                <text class="clock" x="1190" y="166">&lt;6:19</text>
                <svg x="959" y="234" width="273" height="20"><text x="3" y="13">SOK 16620 -0.1366 0.1366 -0.2875 0.2875 -0.1704 0.1704 0.000</text></svg>
                <text x="962" y="672">RSI(14) 57.6253</text>
                <text x="962" y="762">ATR(14) 0.1179</text>
                <rect x="1234" y="147" width="34" height="11" fill="#fff"/>
                <text x="1237" y="156" style="fill:#000">113.30</text>
                <text x="1237" y="166">113.15</text>
                <text x="1237" y="198">112.65</text>
                <text x="1237" y="230">112.15</text>
                <text x="1234" y="244">0.4379</text>
                <text x="1234" y="448"><tspan font-weight="bold">0</tspan>.00</text>
                <text x="1234" y="653">-0.4379</text>
                <text x="1235" y="669">100</text>
                <text x="1233" y="688">70</text>
                <text x="1233" y="723">30</text>
                <text x="1234" y="743">0</text>
                <text x="1234" y="759">0.1945</text>
                <text x="1234" y="788">0.0641</text>
            </svg>
            </div>
        </section>
    </main>

    <!-- Chart tabs -->
    <nav class="flex h-6 shrink-0 items-start border-t-2 border-white text-[#7d7a6c] shadow-[inset_0_1px_#000]">
        <button class="w-[92px] pt-[2px]">EURCHF,M15</button>
        <span class="mt-1 h-3 w-px bg-[#7d7a6c]"></span>
        <button class="w-[83px] pt-[2px]">EURGBP,M15</button>
        <button class="w-[84px] border border-t-0 border-black bg-white pt-[2px] text-black">GBPUSD,M15</button>
        <button class="w-[84px] pt-[2px]">EURJPY,M15</button>
        <span class="mt-1 h-3 w-px bg-[#7d7a6c]"></span>
        <div class="ml-auto mr-[7px] mt-[6px] flex gap-3">
            <button aria-label="Předchozí"><svg class="h-[7px] w-1" fill="#aca899"><path d="M4 0v7L0 3.500z"/></svg></button>
            <button aria-label="Další"><svg class="h-[7px] w-1" fill="#aca899"><path d="M0 0v7l4-3.500z"/></svg></button>
        </div>
    </nav>

    <!-- Terminal -->
    <section class="flex h-[151px] shrink-0 gap-px border-t border-[#aca899] pt-[2px] pr-[3px]">
        <div class="flex w-[14px] flex-col">
            <button aria-label="Zavřít terminál" class="flex h-[13px] items-center justify-center"><svg class="size-[7px]" stroke="#000" stroke-width="2"><path d="M1 1l5 5M6 1L1 6"/></svg></button>
            <div class="mb-[2px] flex-1 rotate-180 bg-linear-to-t from-[#5a8ff0] to-[#0855e0] pt-[2px] text-white [writing-mode:vertical-rl] leading-[14px]">Terminál</div>
        </div>
        <div class="flex min-w-0 flex-1 flex-col">
            <div class="flex-1 border-b border-l border-b-black border-l-[#aca899] bg-white">
                <table class="w-full table-fixed text-right">
                    <thead class="h-5 bg-[#ece9d8] [&_th]:border-r [&_th]:border-[#c9c5b4] [&_th]:pr-[5px] [&_th]:font-normal">
                        <tr class="border-b-2 border-[#d0cdbd]">
                            <th class="w-[124px] pl-[10px] text-left">Pokyn <svg class="ml-2 inline h-[7px] w-[9px]" fill="none"><path d="M1 7l3-6" stroke="#888"/><path d="M4 1l3 6H1" stroke="#fff"/></svg></th>
                            <th class="w-[211px]">Čas</th>
                            <th class="w-[87px]">Typ</th>
                            <th class="w-[66px]">Lotů</th>
                            <th class="w-[86px]">Symbol</th>
                            <th class="w-24">Cena</th>
                            <th class="w-24">Zastavení ztrát</th>
                            <th class="w-24">Realizovat zisk</th>
                            <th class="w-24">Cena</th>
                            <th class="w-24">Provize</th>
                            <th class="w-24">Swap</th>
                            <th>Zisk</th>
                        </tr>
                    </thead>
                    <tbody class="[&_td]:border-r [&_td]:border-[#d5d2c8] [&_td]:pr-[3px]">
                        <tr class="h-5 border-b border-[#c0c0c0]">
                            <td><span class="flex items-center gap-[6px] pl-1"><svg class="h-[14px] w-[14px]"><path d="M.5.5h7l3 3v10H.5z" fill="#fff" stroke="#444"/><circle cx="10" cy="10.500" r="3.500" fill="#e23d1c"/></svg>35777255</span></td>
                            <td>2011.02.01 11:10</td><td>sell</td><td>0.17</td><td>gbpusd</td><td>1.6056</td><td>0.0000</td><td>0.0000</td><td>1.6104</td><td>0.00</td><td>0.00</td><td class="pr-1!">-81.60</td>
                        </tr>
                        <tr class="h-5 bg-[#ebebeb]">
                            <td><span class="flex items-center gap-[6px] pl-1"><svg class="h-[14px] w-[14px]"><path d="M.5.5h7l3 3v10H.5z" fill="#fff" stroke="#444"/><circle cx="10" cy="10.500" r="3.500" fill="#2c86d6"/></svg>35777272</span></td>
                            <td>2011.02.01 11:10</td><td>buy</td><td>0.32</td><td>eurgbp</td><td>0.8541</td><td>0.0000</td><td>0.0000</td><td>0.8579</td><td>0.00</td><td>0.00</td><td class="pr-1!">195.78</td>
                        </tr>
                        <tr class="h-5 bg-[#c8c8c8] font-bold">
                            <td colspan="11" class="border-0!"><span class="flex items-center gap-2 pl-1 whitespace-pre"><svg class="h-3 w-3"><rect x=".5" y=".5" width="11" height="11" fill="#fff" stroke="#777"/><path d="M6 2l4 4H7.500v4h-3V6H2z" fill="#1ca01c"/></svg>Zůstatek: 2 525.36  Majetek: 2 639.54  Marže: 711.74  Dostupná marže: 1 927.80  Výška marže: 370.86%</span></td>
                            <td class="border-0! pr-1!">114.18</td>
                        </tr>
                    </tbody>
                </table>
            </div>
            <nav class="flex h-[22px] items-start text-[#7d7a6c]">
                <button class="-mt-px ml-[2px] h-[19px] w-[58px] border border-t-0 border-black bg-white text-black">Obchod</button>
                <button class="w-[79px]">Historie účtu</button><span class="mt-[3px] h-3 w-px bg-[#7d7a6c]"></span>
                <button class="w-[52px]">Alarmy</button><span class="mt-[3px] h-3 w-px bg-[#7d7a6c]"></span>
                <button class="w-[106px]">Poštovní schránka</button><span class="mt-[3px] h-3 w-px bg-[#7d7a6c]"></span>
                <button class="w-[62px]">Strategie</button><span class="mt-[3px] h-3 w-px bg-[#7d7a6c]"></span>
                <button class="w-[49px]">Deník</button><span class="mt-[3px] h-3 w-px bg-[#7d7a6c]"></span>
            </nav>
        </div>
    </section>

    <!-- Status bar -->
    <div class="flex h-[21px] shrink-0 items-center border-t border-[#aca899] pt-[3px] [&>span]:h-4 [&>span]:border-l [&>span]:border-[#aca899]">
        <p class="flex-1 pl-[2px]">Transakce</p>
        <span class="w-[109px] pl-1">Gartley</span>
        <span class="w-[101px]"></span>
        <span class="w-[72px]"></span>
        <span class="w-[71px]"></span>
        <span class="w-[69px]"></span>
        <span class="w-[71px]"></span>
        <span class="w-[66px]"></span>
        <span class="w-[162px] flex items-center gap-[29px] pl-[5px]">
            <svg class="h-[13px] w-6" stroke-width="2"><path d="M1 0v9M4 0v8M7 0v8M10 0v7M13 0v6M16 0v5M19 0v4M22 0v3" stroke="#7e9218"/><path d="M1 13v-3M4 13V9M7 13V9M10 13V8M13 13V7M16 13V6M19 13V5M22 13V4" stroke="#1d4f6e"/></svg>
            49/0 kb
            <svg class="ml-auto size-4" stroke="#aca899" stroke-width="2"><path d="M2 16L16 2M7 16l9-9M12 16l4-4"/></svg>
        </span>
    </div>

    <!-- Taskbar -->
    <footer class="flex h-[30px] shrink-0 items-stretch bg-linear-to-b from-[#3f8cf3] via-[#245ddb] via-20% to-[#1f4fc0] text-white">
        <button class="flex w-[98px] items-center gap-1 rounded-r-xl bg-linear-to-b from-[#5eac56] via-[#3c9a3c] via-25% to-[#2f8030] pl-2 shadow-[inset_-3px_0_4px_#1f6a22]">
            <svg class="h-5 w-[22px]"><path d="M4 3c3-2 5-1 7 0l-2 7c-2-1-4-2-7 0z" fill="#f0602c"/><path d="M12 3c2 1 4 2 8 0l-2 7c-3 2-5 1-8 0z" fill="#8cc63c"/><path d="M2 11c3-2 5-1 7 0l-2 7c-2-1-4-2-7 0z" fill="#4a8fe8"/><path d="M10 11c2 1 4 2 8 0l-2 7c-3 2-5 1-8 0z" fill="#fbd02c"/></svg>
            <span class="caption text-[17px] font-bold italic [text-shadow:1px_1px_2px_#1b4d1b]">Start</span>
        </button>
        <button class="mt-[3px] mb-[2px] ml-[10px] flex w-[160px] items-center gap-1 rounded-[3px] bg-[#1e52b7] pt-px pl-[11px] shadow-[inset_1px_1px_2px_#123a8c]">
            <svg class="size-4"><use href="#i-globe"/></svg>
            1249948: MetaTrade...
        </button>
        <span class="mr-5 ml-auto self-center bg-[#3566cf] px-[2px]">CS</span>
        <div class="flex w-[93px] items-center gap-[2px] border-l border-[#0f60b8] bg-linear-to-b from-[#19b9f3] via-[#1290e8] via-20% to-[#1186dc]">
            <button aria-label="Zobrazit skryté ikony" class="-ml-2"><svg class="size-4"><circle cx="8" cy="8" r="7.500" fill="#2f7fe0" stroke="#7fc0f5"/><path d="M9.500 4.500L6 8l3.500 3.500" fill="none" stroke="#fff" stroke-width="2"/></svg></button>
            <svg class="ml-px size-4"><rect width="16" height="16" fill="#e0482c"/><rect x="2" width="12" height="8" fill="#5b2c9a"/><path d="M4 7V2h3v5M7 2h4v5" stroke="#e88cf0" fill="none"/><path d="M2 9v6M6 15v-5h3M12 9v6M10 11h4" stroke="#ffd93c" stroke-width="2" fill="none"/></svg>
            <svg class="size-4"><rect x="1" y="1" width="14" height="14" rx="2" fill="#f4f4f4" stroke="#d22" stroke-width="2"/><path d="M4 4l8 8M12 4l-8 8" stroke="#d22" stroke-width="3"/></svg>
            <time class="ml-1">10:38</time>
        </div>
    </footer>

    <script>
        // Thin bars: colour + high-low, one bar every 6 units (3 units per pixel)
        const bars = {
            eurgbp: { x: 22, up: '#32cd32', down: '#d81e14', data: 'r280-322 g298-320 r298-318 r300-326 g306-330 r308-340 g318-346 r314-340 r326-352 r336-362 r340-366 g348-370 g350-375 g340-366 g318-350 g298-326 g276-312 g255-302 r215-275 g175-235 g192-218 r195-222 r198-232 g190-215 g183-208 r183-205 r192-215 r200-235 g192-228 r188-210 r195-218 r205-225 r210-232 g205-228 r208-224 r200-222 g203-220 r205-226 g205-222 r208-226 g208-228 r210-232 g208-230 r212-230 g208-225 r212-235 g212-230 g205-228 g198-215 g192-215 r190-208 g185-208 g178-195 g172-192 r165-188 g158-185 g160-190 r145-185 r175-205 g172-205 r182-200 r175-200 g160-190 r180-202 r178-200 g185-205 r190-210 g178-205 r190-215 g185-208 r190-208 g188-205 r190-210 r195-214 r195-218 r200-220 r205-222 g200-225 g190-212 g178-205 r175-195 g175-205 g152-195 r158-180 r172-215 g165-208 r160-182 r180-212 g188-218 r195-232 g145-222' },
            eurjpy: { x: 34, up: '#22dd22', down: '#d8200e', data: 'r240-265 r265-308 r295-340 r328-375 g310-378 g300-350 g298-330 g275-305 g248-290 g228-262 g228-258 r236-254 g238-258 r236-260 r238-285 g262-285 g250-285 r265-295 r275-300 r280-310 g278-308 r280-300 g272-308 g268-292 r262-298 r265-325 r295-332 g285-325 g258-298 g245-282 r248-270 r258-282 g262-288 g208-275 r240-265 r250-292 r252-290 r255-295 g268-295 r262-306 r270-305 g280-298 g280-300 g265-290 g260-275 g243-268 r250-272 r258-282 g262-285 g242-272 g225-250 g238-252 r235-258 g225-245 g190-235 r195-215 g200-222 r195-212 g200-225 r205-228 r200-215 r212-235 g205-235 g195-222 g182-210 g165-198 g150-180 g138-165 r140-172 r168-190 r175-200 g165-202 g140-175 r135-160 r155-180 r160-182 g158-178 r150-172 g145-165 g152-172 r158-178 g160-175 r162-190 r172-195 r170-192 g165-188 g158-175 g155-170 g150-170 r150-165 r155-178 r165-182 g168-182 g158-175 g155-170 r158-180 r172-202 r180-208 g188-210 r185-212 g175-205 g165-192 r172-205 g188-212 g182-210 g152-200 g155-178' }
        };
        // Candles: colour + high-low-top-bottom, one candle every 12 units
        const candles = {
            gbpusd: { x: 31, up: '#00f000', down: '#f00000', data: 'r215-248-220-242 g210-247-220-240 g203-232-210-226 r208-225-211-221 r208-241-212-234 g213-237-221-233 g212-232-219-222 g195-223-206-214 r205-226-210-221 r203-230-213-223 r206-233-218-230 r203-235-219-229 g200-238-206-215 r193-230-205-209 r204-243-207-240 g220-256-229-245 g215-240-226-231 r224-291-227-273 g240-286-257-270 g222-265-227-257 g203-237-209-227 g194-222-203-206 g192-211-204-207 r204-226-205-214 g186-218-193-212 g183-211-190-206 r178-214-189-210 g160-214-168-211 g168-190-170-173 r170-206-175-195 g175-206-188-191 g178-210-180-190 g152-196-156-182 r143-184-157-178 g152-180-158-176 g136-166-154-165 r148-191-157-177 r165-203-172-188 g158-196-171-188 r160-207-172-205 g168-202-193-196 r182-212-188-208 g168-211-172-204 r148-202-172-195 r188-287-193-273 g225-275-237-272 g193-261-205-250 g167-233-206-212 r203-311-206-237 r210-303-231-275 g231-305-231-277 r187-292-230-253 r195-383-252-352' },
            eurchf: { x: 31, up: '#32cd32', down: '#f00000', data: 'g245-308-247-308 r240-275-244-262 r248-280-257-269 g245-278-261-275 r250-278-258-270 r252-285-260-279 g260-285-268-271 g255-288-260-274 r253-292-258-284 r275-355-280-308 g280-312-283-308 g272-303-285-289 g265-298-273-292 g263-282-270-273 g246-278-262-268 r254-272-260-264 r262-290-266-284 r265-292-277-289 r278-292-283-287 r281-308-285-290 g250-293-254-287 r235-278-250-271 g265-278-268-272 r258-278-265-273 g236-276-240-270 r235-270-240-268 g245-268-252-266 r243-265-249-253 g236-262-241-256 r236-265-244-258 r250-268-252-258 r250-268-256-264 g245-268-258-268 r245-265-250-253 g238-262-242-258 g230-250-234-243 g228-242-234-238 r230-250-234-247 r243-262-247-260 g250-268-257-262 g235-268-255-258 r248-273-255-262 g236-268-250-262 r245-272-250-268 r245-273-262-268 r235-295-257-290 g265-298-280-293 g258-290-275-285 r228-282-260-276 g255-290-260-277 r255-308-257-272 g240-280-248-270 g210-258-217-248 g165-216-177-214 g147-190-148-178' }
        };

        function rect(x, y, w, h, fill) {
            return `<rect x="${x}" y="${y}" width="${w}" height="${h}" fill="${fill}"/>`;
        }

        document.querySelectorAll('.candles').forEach(function(g) {
            const name = g.dataset.chart;
            const set = bars[name] || candles[name];
            const step = bars[name] ? 2 : 4;
            const start = Math.floor(set.x / 3);
            g.innerHTML = set.data.split(' ').map(function(item, i) {
                const color = item[0] === 'g' ? set.up : set.down;
                const [high, low, top, bottom] = item.slice(1).split('-').map(n => Math.round(n / 3));
                const x = start + i * step;
                let out = rect(x, high, 1, low - high, color);
                if (top) {
                    out += rect(x - 1, top, 3, Math.max(bottom - top, 1), color);
                }
                return out;
            }).join('');
        });
    </script>
</body>
</html>
